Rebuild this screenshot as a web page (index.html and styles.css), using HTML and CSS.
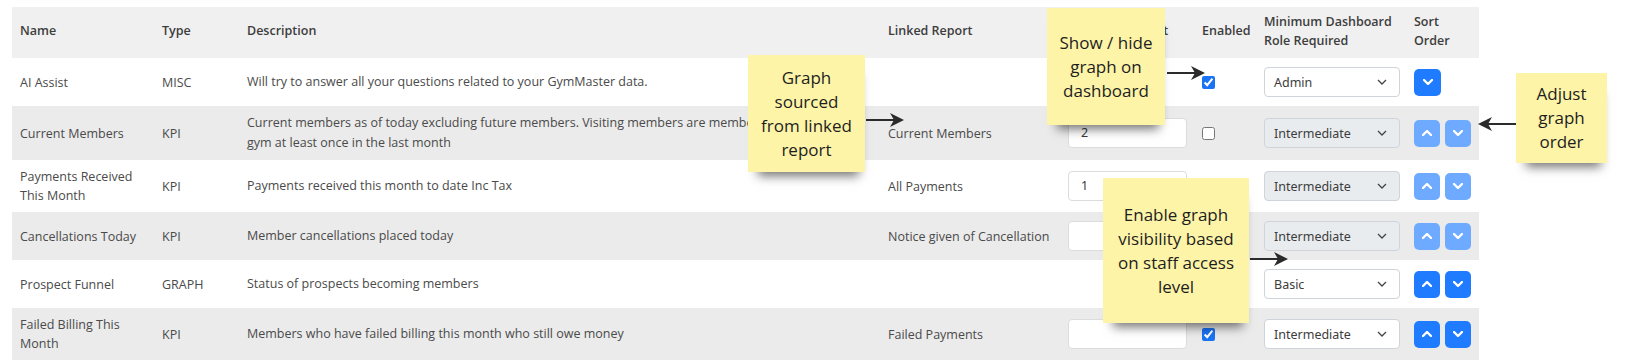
FILE: index.html
```html
<!DOCTYPE html>
<html lang="en">
<head>
    <meta charset="UTF-8">
    <title>Dashboard Graphs</title>
    <link rel="stylesheet" href="styles.css">
</head>
<body>
    <div class="board">
        <table class="graphs">
            <colgroup>
                <col class="c-name">
                <col class="c-type">
                <col class="c-desc">
                <col class="c-report">
                <col class="c-limit">
                <col class="c-enabled">
                <col class="c-role">
                <col class="c-sort">
            </colgroup>
            <thead>
                <tr>
                    <th>Name</th>
                    <th>Type</th>
                    <th>Description</th>
                    <th>Linked Report</th>
                    <th>Dashboard Limit</th>
                    <th>Enabled</th>
                    <th>Minimum Dashboard<br>Role Required</th>
                    <th>Sort<br>Order</th>
                </tr>
            </thead>
            <tbody>
                <tr>
                    <td>AI Assist</td>
                    <td>MISC</td>
                    <td class="desc">Will try to answer all your questions related to your GymMaster data.</td>
                    <td></td>
                    <td></td>
                    <td><input type="checkbox" checked></td>
                    <td><div class="select">Admin <svg width="10" height="6" viewBox="0 0 10 6"><polyline points="1,1 5,5 9,1"/></svg></div></td>
                    <td>
                        <div class="sort">
                            <span class="btn"><svg width="10" height="6" viewBox="0 0 10 6"><polyline points="1,1 5,5 9,1"/></svg></span>
                        </div>
                    </td>
                </tr>
                <tr>
                    <td>Current Members</td>
                    <td>KPI</td>
                    <td class="desc">Current members as of today excluding future members. Visiting members are members who visited the gym at least once in the last month</td>
                    <td>Current Members</td>
                    <td><div class="field">2</div></td>
                    <td><input type="checkbox"></td>
                    <td><div class="select off">Intermediate <svg width="10" height="6" viewBox="0 0 10 6"><polyline points="1,1 5,5 9,1"/></svg></div></td>
                    <td>
                        <div class="sort off">
                            <span class="btn"><svg width="10" height="6" viewBox="0 0 10 6"><polyline points="1,5 5,1 9,5"/></svg></span>
                            <span class="btn"><svg width="10" height="6" viewBox="0 0 10 6"><polyline points="1,1 5,5 9,1"/></svg></span>
                        </div>
                    </td>
                </tr>
                <tr>
                    <td>Payments Received This Month</td>
                    <td>KPI</td>
                    <td class="desc">Payments received this month to date Inc Tax</td>
                    <td>All Payments</td>
                    <td><div class="field">1</div></td>
                    <td><input type="checkbox"></td>
                    <td><div class="select off">Intermediate <svg width="10" height="6" viewBox="0 0 10 6"><polyline points="1,1 5,5 9,1"/></svg></div></td>
                    <td>
                        <div class="sort off">
                            <span class="btn"><svg width="10" height="6" viewBox="0 0 10 6"><polyline points="1,5 5,1 9,5"/></svg></span>
                            <span class="btn"><svg width="10" height="6" viewBox="0 0 10 6"><polyline points="1,1 5,5 9,1"/></svg></span>
                        </div>
                    </td>
                </tr>
                <tr>
                    <td>Cancellations Today</td>
                    <td>KPI</td>
                    <td class="desc">Member cancellations placed today</td>
                    <td>Notice given of Cancellation</td>
                    <td><div class="field"></div></td>
                    <td><input type="checkbox"></td>
                    <td><div class="select off">Intermediate <svg width="10" height="6" viewBox="0 0 10 6"><polyline points="1,1 5,5 9,1"/></svg></div></td>
                    <td>
                        <div class="sort off">
                            <span class="btn"><svg width="10" height="6" viewBox="0 0 10 6"><polyline points="1,5 5,1 9,5"/></svg></span>
                            <span class="btn"><svg width="10" height="6" viewBox="0 0 10 6"><polyline points="1,1 5,5 9,1"/></svg></span>
                        </div>
                    </td>
                </tr>
                <tr>
                    <td>Prospect Funnel</td>
                    <td>GRAPH</td>
                    <td class="desc">Status of prospects becoming members</td>
                    <td></td>
                    <td></td>
                    <td><input type="checkbox"></td>
                    <td><div class="select">Basic <svg width="10" height="6" viewBox="0 0 10 6"><polyline points="1,1 5,5 9,1"/></svg></div></td>
                    <td>
                        <div class="sort">
                            <span class="btn"><svg width="10" height="6" viewBox="0 0 10 6"><polyline points="1,5 5,1 9,5"/></svg></span>
                            <span class="btn"><svg width="10" height="6" viewBox="0 0 10 6"><polyline points="1,1 5,5 9,1"/></svg></span>
                        </div>
                    </td>
                </tr>
                <tr>
                    <td>Failed Billing This Month</td>
                    <td>KPI</td>
                    <td class="desc">Members who have failed billing this month who still owe money</td>
                    <td>Failed Payments</td>
                    <td><div class="field"></div></td>
                    <td><input type="checkbox" checked></td>
                    <td><div class="select">Intermediate <svg width="10" height="6" viewBox="0 0 10 6"><polyline points="1,1 5,5 9,1"/></svg></div></td>
                    <td>
                        <div class="sort">
                            <span class="btn"><svg width="10" height="6" viewBox="0 0 10 6"><polyline points="1,5 5,1 9,5"/></svg></span>
                            <span class="btn"><svg width="10" height="6" viewBox="0 0 10 6"><polyline points="1,1 5,5 9,1"/></svg></span>
                        </div>
                    </td>
                </tr>
            </tbody>
        </table>

        <!-- sticky notes -->
        <div class="note note-report">Graph<br>sourced<br>from linked<br>report</div>
        <div class="note note-enabled">Show / hide<br>graph on<br>dashboard</div>
        <div class="note note-order">Adjust<br>graph<br>order</div>
        <div class="note note-role">Enable graph<br>visibility based<br>on staff access<br>level</div>

        <svg class="arrow arrow-report" width="40" height="18" viewBox="0 0 40 18"><line x1="0" y1="9" x2="28" y2="9"/><path d="M38 9 L24 2 L28 9 L24 16 Z"/></svg>
        <svg class="arrow arrow-enabled" width="40" height="18" viewBox="0 0 40 18"><line x1="0" y1="9" x2="28" y2="9"/><path d="M38 9 L24 2 L28 9 L24 16 Z"/></svg>
        <svg class="arrow arrow-order" width="40" height="18" viewBox="0 0 40 18"><line x1="0" y1="9" x2="28" y2="9"/><path d="M38 9 L24 2 L28 9 L24 16 Z"/></svg>
        <svg class="arrow arrow-role" width="40" height="18" viewBox="0 0 40 18"><line x1="0" y1="9" x2="28" y2="9"/><path d="M38 9 L24 2 L28 9 L24 16 Z"/></svg>
    </div>
</body>
</html>
```

FILE: styles.css
```css
body {
    margin: 0;
    font-family: "Open Sans", Arial, sans-serif;
    background: #fff;
}
.board {
    position: relative;
    padding: 7px 0 0 12px;
    height: 353px;
}
.graphs {
    border-collapse: collapse;
    table-layout: fixed;
    width: 1467px;
    font-size: 12.5px;
    color: #4a4a4a;
}
.c-name { width: 142px; }
.c-type { width: 85px; }
.c-desc { width: 641px; }
.c-report { width: 180px; }
.c-limit { width: 134px; }
.c-enabled { width: 62px; }
.c-role { width: 150px; }
.c-sort { width: 73px; }

.graphs th {
    height: 47px;
    padding: 0 8px 4px;
    background: #f0f0f0;
    text-align: left;
    font-weight: 600;
    color: #3d3d3d;
    line-height: 19px;
}
.graphs tbody tr {
    height: 48px;
}
.graphs td {
    padding: 7px 8px;
    line-height: 19px;
    vertical-align: middle;
}
.graphs td.desc {
    line-height: 20px;
}
.graphs tbody tr:nth-child(even) td {
    background: #ebebeb;
}
.graphs input[type="checkbox"] {
    display: block;
    margin: 0;
    width: 13px;
    height: 13px;
    accent-color: #1a73f5;
}
.field {
    box-sizing: border-box;
    width: 119px;
    height: 30px;
    padding: 0 12px;
    background: #fff;
    border: 1px solid #dcdcdc;
    border-radius: 4px;
    font-family: "Noto Sans", Arial, sans-serif;
    font-size: 12.5px;
    line-height: 28px;
    color: #3a3a3a;
}
.select {
    box-sizing: border-box;
    display: flex;
    align-items: center;
    justify-content: space-between;
    width: 136px;
    height: 30px;
    padding: 0 12px 0 9px;
    background: #fff;
    border: 1px solid #ced4da;
    border-radius: 4px;
    font-family: "Noto Sans", Arial, sans-serif;
    font-size: 12.5px;
    color: #3c3c3c;
}
.select.off {
    background: #e9ecef;
}
.select svg polyline {
    fill: none;
    stroke: #444;
    stroke-width: 1.3;
}
.sort {
    display: flex;
    gap: 5px;
}
.btn {
    display: flex;
    align-items: center;
    justify-content: center;
    width: 27px;
    height: 27px;
    border-radius: 5px;
    background: #1f7bff;
}
.sort.off .btn {
    background: #6eaaff;
}
.btn svg polyline {
    fill: none;
    stroke: #fff;
    stroke-width: 2.4;
    stroke-linecap: round;
    stroke-linejoin: round;
}

.note {
    position: absolute;
    box-sizing: border-box;
    display: flex;
    align-items: center;
    justify-content: center;
    text-align: center;
    background: #fdf4a8;
    color: #1e1e1e;
    font-size: 17px;
    line-height: 24px;
    box-shadow: 2px 12px 10px -8px rgba(0, 0, 0, 0.55);
}
.note-report { left: 748px; top: 55px; width: 117px; height: 117px; }
.note-enabled { left: 1047px; top: 8px; width: 118px; height: 117px; }
.note-order { left: 1516px; top: 73px; width: 91px; height: 90px; }
.note-role { left: 1103px; top: 178px; width: 146px; height: 145px; }

.arrow {
    position: absolute;
}
.arrow line {
    stroke: #2b2b2b;
    stroke-width: 2;
}
.arrow path {
    fill: #2b2b2b;
}
.arrow-report { left: 866px; top: 111px; }
.arrow-enabled { left: 1167px; top: 64px; }
.arrow-order { left: 1476px; top: 115px; transform: scaleX(-1); }
.arrow-role { left: 1250px; top: 250px; }
```
